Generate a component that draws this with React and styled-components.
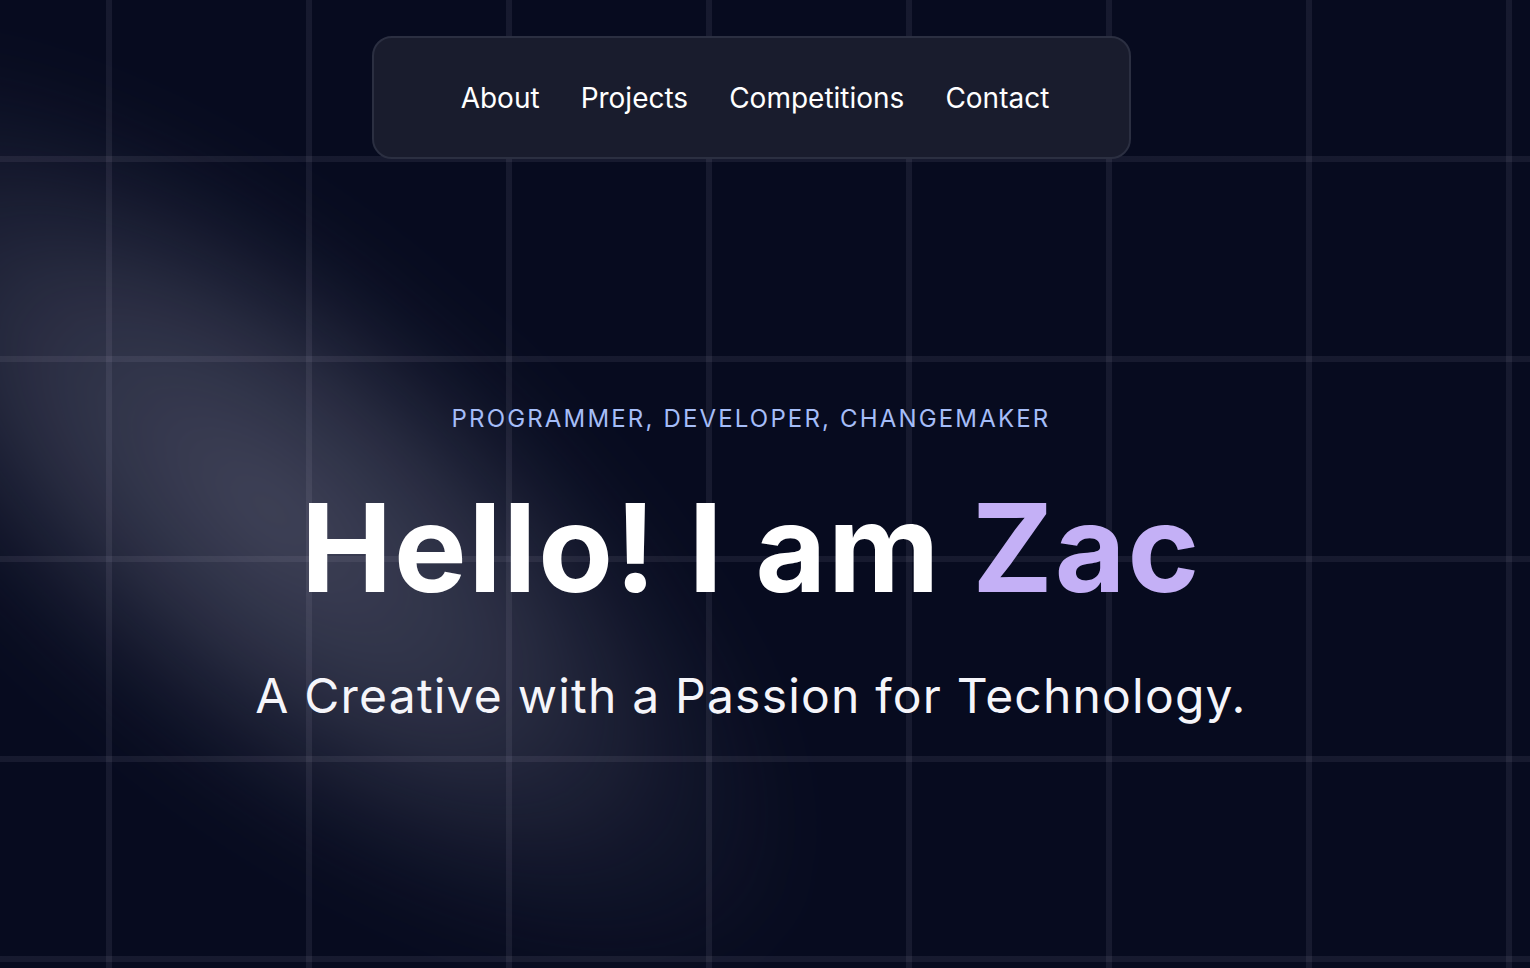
import styled, { createGlobalStyle } from 'styled-components';

const GlobalStyle = createGlobalStyle`
  html, body {
    margin: 0;
    padding: 0;
    background-color: #070b1f;
  }
  body {
    font-family: Inter, 'Noto Sans', sans-serif;
    -webkit-font-smoothing: antialiased;
  }
`;

const Page = styled.div`
  position: relative;
  min-height: 100vh;
  overflow: hidden;
  background-color: #070b1f;
`;

// soft light blob behind the grid, running diagonally from the top-left
const Glow = styled.div`
  position: absolute;
  left: -380px;
  top: 240px;
  width: 1300px;
  height: 540px;
  transform: rotate(40deg);
  background: radial-gradient(
    ellipse at center,
    rgba(120, 122, 145, 0.5) 0%,
    rgba(110, 112, 135, 0.36) 30%,
    rgba(80, 84, 108, 0.14) 55%,
    rgba(7, 11, 31, 0) 72%
  );
  filter: blur(28px);
  pointer-events: none;
`;

const GridLines = styled.div`
  position: absolute;
  inset: 0;
  background-image:
    linear-gradient(to right, rgba(225, 215, 240, 0.075) 6px, transparent 6px),
    linear-gradient(to bottom, rgba(225, 215, 240, 0.075) 6px, transparent 6px);
  background-size: 200px 200px;
  background-position: 106px 156px;
  pointer-events: none;
`;

const Content = styled.div`
  position: relative;
  z-index: 1;
  display: flex;
  flex-direction: column;
  align-items: center;
  padding: 36px 28px 0 0;
`;

const Nav = styled.nav`
  box-sizing: border-box;
  width: 759px;
  height: 123px;
  display: flex;
  align-items: center;
  justify-content: center;
  gap: 41px;
  padding: 0 82px 0 90px;
  background-color: #191c2d;
  border: 2px solid #2b2f41;
  border-radius: 20px;
`;

const NavLink = styled.a`
  color: #ffffff;
  font-size: 28px;
  font-weight: 400;
  text-decoration: none;
  cursor: pointer;
  &:hover {
    color: #c4b5fd;
  }
`;

const Hero = styled.section`
  display: flex;
  flex-direction: column;
  align-items: center;
  margin-top: 245px;
  text-align: center;
`;

const Eyebrow = styled.p`
  margin: 0;
  color: #a5bdf8;
  font-size: 24px;
  line-height: 29px;
  font-weight: 400;
  letter-spacing: 0.09em;
  text-transform: uppercase;
`;

const Title = styled.h1`
  margin: 42px 0 0;
  color: #ffffff;
  font-size: 122px;
  line-height: 146px;
  font-weight: 700;
  letter-spacing: 0.015em;
`;

const Accent = styled.span`
  color: #c4b0f6;
`;

const Tagline = styled.p`
  margin: 46px 0 0;
  color: #f5f5fa;
  font-size: 48px;
  line-height: 58px;
  font-weight: 400;
  letter-spacing: 0.025em;
`;

const links = ['About', 'Projects', 'Competitions', 'Contact'];

const App = () => {
  return (
    <Page>
      <GlobalStyle />
      <Glow />
      <GridLines />
      <Content>
        <Nav>
          {links.map((label) => (
            <NavLink key={label} href={`#${label.toLowerCase()}`}>
              {label}
            </NavLink>
          ))}
        </Nav>
        <Hero>
          <Eyebrow>Programmer, Developer, Changemaker</Eyebrow>
          <Title>
            Hello! I am <Accent>Zac</Accent>
          </Title>
          <Tagline>A Creative with a Passion for Technology.</Tagline>
        </Hero>
      </Content>
    </Page>
  );
};

export default App;
